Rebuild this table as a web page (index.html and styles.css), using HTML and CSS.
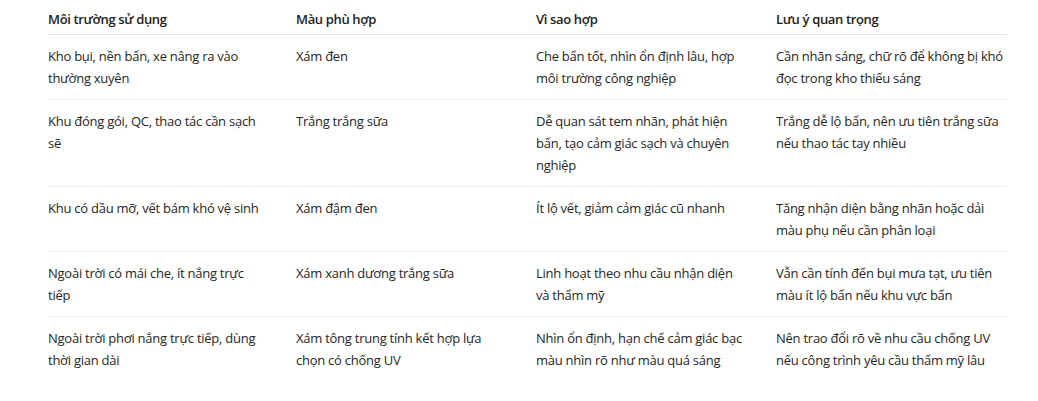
FILE: index.html
```html
<!DOCTYPE html>
<html lang="vi">
<head>
<meta charset="utf-8">
<title>Bảng màu</title>
<link rel="stylesheet" href="styles.css">
</head>
<body>
<div class="wrap">
<table class="tbl">
<colgroup>
<col class="c1"><col class="c2"><col class="c3"><col class="c4">
</colgroup>
<thead>
<tr><th>Môi trường sử dụng</th><th>Màu phù hợp</th><th>Vì sao hợp</th><th>Lưu ý quan trọng</th></tr>
</thead>
<tbody>
<tr><td>Kho bụi, nền bẩn, xe nâng ra vào thường xuyên</td><td>Xám đen</td><td>Che bẩn tốt, nhìn ổn định lâu, hợp môi trường công nghiệp</td><td>Cần nhãn sáng, chữ rõ để không bị khó đọc trong kho thiếu sáng</td></tr>
<tr><td>Khu đóng gói, QC, thao tác cần sạch sẽ</td><td>Trắng trắng sữa</td><td>Dễ quan sát tem nhãn, phát hiện bẩn, tạo cảm giác sạch và chuyên nghiệp</td><td>Trắng dễ lộ bẩn, nên ưu tiên trắng sữa nếu thao tác tay nhiều</td></tr>
<tr><td>Khu có dầu mỡ, vết bám khó vệ sinh</td><td>Xám đậm đen</td><td>Ít lộ vết, giảm cảm giác cũ nhanh</td><td>Tăng nhận diện bằng nhãn hoặc dải màu phụ nếu cần phân loại</td></tr>
<tr><td>Ngoài trời có mái che, ít nắng trực tiếp</td><td>Xám xanh dương trắng sữa</td><td>Linh hoạt theo nhu cầu nhận diện và thẩm mỹ</td><td>Vẫn cần tính đến bụi mưa tạt, ưu tiên màu ít lộ bẩn nếu khu vực bẩn</td></tr>
<tr><td>Ngoài trời phơi nắng trực tiếp, dùng thời gian dài</td><td>Xám tông trung tính kết hợp lựa chọn có chống UV</td><td>Nhìn ổn định, hạn chế cảm giác bạc màu nhìn rõ như màu quá sáng</td><td>Nên trao đổi rõ về nhu cầu chống UV nếu công trình yêu cầu thẩm mỹ lâu</td></tr>
</tbody>
</table>
</div>
</body>
</html>
```
FILE: styles.css
```css
html, body {
  margin: 0;
  padding: 0;
  background: #ffffff;
}
body {
  font-family: "Open Sans", "Noto Sans", "Liberation Sans", sans-serif;
  font-size: 13px;
  letter-spacing: -0.25px;
  color: #262626;
}
.wrap {
  padding: 0 31px 0 48px;
}
.tbl {
  width: 959px;
  table-layout: fixed;
  border-collapse: collapse;
}
.c1 { width: 248px; }
.c2 { width: 240px; }
.c3 { width: 240px; }
.c4 { width: 231px; }
.tbl th {
  text-align: left;
  font-weight: 600;
  letter-spacing: -0.35px;
  color: #1c1c1c;
  line-height: 22px;
  padding: 8px 32px 4px 0;
  border-bottom: 1px solid #e3e3e3;
}
.tbl td {
  vertical-align: top;
  line-height: 22px;
  padding: 10px 32px 10px 0;
  border-bottom: 1px solid #efefef;
}
.tbl tbody tr:last-child td {
  border-bottom: none;
}
.tbl th:last-child,
.tbl td:last-child {
  padding-right: 0;
}
```
